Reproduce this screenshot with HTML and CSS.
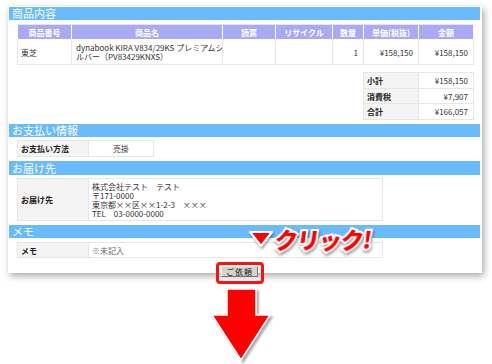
FILE: index.html
```html
<!DOCTYPE html>
<html lang="ja">
<head>
<meta charset="utf-8">
<link rel="stylesheet" href="styles.css">
</head>
<body>
<div class="panel">
  <h2 class="bar">商品内容</h2>
  <table class="grid items">
    <colgroup>
      <col class="c1"><col class="c2"><col class="c3"><col class="c4"><col class="c5"><col class="c6"><col class="c7">
    </colgroup>
    <tr class="head">
      <th>商品番号</th><th>商品名</th><th>読票</th><th>リサイクル</th><th>数量</th><th>単価(税抜)</th><th>金額</th>
    </tr>
    <tr class="item">
      <td>東芝</td>
      <td class="name"><div class="ln">dynabook KIRA V834/29KS プレミアムシ</div><div class="ln">ルバー（PV83429KNXS）</div></td>
      <td></td><td></td>
      <td class="num">1</td>
      <td class="num">¥158,150</td>
      <td class="num">¥158,150</td>
    </tr>
  </table>
  <table class="grid summary">
    <colgroup><col class="s1"><col class="s2"></colgroup>
    <tr class="r1"><td class="label">小計</td><td class="num">¥158,150</td></tr>
    <tr class="r2"><td class="label">消費税</td><td class="num">¥7,907</td></tr>
    <tr class="r3"><td class="label">合計</td><td class="num">¥166,057</td></tr>
  </table>

  <h2 class="bar bar2">お支払い情報</h2>
  <table class="grid pay">
    <colgroup><col class="l"><col class="pv"></colgroup>
    <tr><td class="label">お支払い方法</td><td class="center">売掛</td></tr>
  </table>

  <h2 class="bar bar3">お届け先</h2>
  <table class="grid addr">
    <colgroup><col class="l"><col class="av"></colgroup>
    <tr>
      <td class="label">お届け先</td>
      <td class="lines"><div class="ln">株式会社テスト　テスト</div><div class="ln">〒171-0000</div><div class="ln">東京都××区××1-2-3　×××</div><div class="ln">TEL　03-0000-0000</div></td>
    </tr>
  </table>

  <h2 class="bar bar4">メモ</h2>
  <table class="grid memo">
    <colgroup><col class="l"><col class="av"></colgroup>
    <tr><td class="label">メモ</td><td class="muted">※未記入</td></tr>
  </table>

  <div class="actions">
    <span class="btn-wrap"><button class="btn" type="button">ご依頼</button></span>
  </div>
</div>

<div class="down">
  <svg class="arrow" width="70" height="76" viewBox="0 0 70 76">
    <polygon points="19,2 48,2 48,28 62,28 33,73 4,28 19,28" fill="#ff0000" stroke="#ffffff" stroke-width="1.5" stroke-linejoin="miter"/>
  </svg>
</div>

<div class="callout">
  <svg class="tri" width="26" height="19" viewBox="0 0 26 19">
    <polygon points="2,2 24,2 13,16" fill="#ff0000" stroke="#ffffff" stroke-width="2.2" stroke-linejoin="round"/>
  </svg>
  <span class="click">クリック!</span>
</div>
</body>
</html>
```

FILE: styles.css
```css
html, body {
  margin: 0;
  padding: 0;
}
body {
  width: 492px;
  height: 364px;
  overflow: hidden;
  position: relative;
  background: #ffffff;
  font-family: "Noto Sans CJK JP", "Noto Sans", sans-serif;
  color: #333333;
}

.panel {
  margin: 6px 0 0 8px;
  width: 474px;
  height: 267px;
  box-sizing: border-box;
  padding-top: 1px;
  background: #ffffff;
  box-shadow: 2px 3px 7px rgba(0, 0, 0, 0.34);
}

.bar {
  margin: 0 2px 0 1px;
  height: 13px;
  padding-left: 3px;
  background: #69bbfc;
  color: #ffffff;
  font-size: 11px;
  font-weight: normal;
  line-height: 13px;
  white-space: nowrap;
}
.bar2 { margin-top: 4px; }
.bar3 { margin-top: 4px; height: 14px; line-height: 14px; }
.bar4 { margin-top: 4px; }

.grid {
  border-collapse: collapse;
  table-layout: fixed;
  margin-left: 9px;
  font-size: 8px;
  line-height: 9px;
}
.grid td,
.grid th {
  border: 1px solid #e6e6e6;
  padding: 0 3px;
  white-space: nowrap;
  overflow: hidden;
}
.ln {
  height: 9px;
  line-height: 9px;
}

.items {
  width: 456px;
  margin-top: 4px;
}
.items .c1 { width: 54px; }
.items .c2 { width: 151px; }
.items .c3 { width: 53px; }
.items .c4 { width: 57px; }
.items .c5 { width: 31px; }
.items .c6 { width: 55px; }
.items .c7 { width: 55px; }
.items .head { height: 15px; }
.items th {
  background: #aaaaf4;
  color: #ffffff;
  font-weight: bold;
  border-color: #ffffff;
  border-top-color: #e6e6e6;
}
.items .item { height: 25px; }
.items .name { padding-left: 4px; }

.num {
  text-align: right;
  padding-right: 5px !important;
}
.center { text-align: center; }

.summary {
  width: 110px;
  margin-top: 7px;
  margin-left: 355px;
}
.summary .s1 { width: 55px; }
.summary .s2 { width: 55px; }
.summary .r1 { height: 16px; }
.summary .r2 { height: 15px; }
.summary .r3 { height: 16px; }

.label {
  background: #f4f4f4;
  font-weight: bold;
  color: #222222;
}

.pay {
  width: 136px;
  margin-top: 3px;
}
.pay .l { width: 71px; }
.pay .pv { width: 65px; }
.pay tr { height: 16px; }

.addr {
  width: 365px;
  margin-top: 3px;
}
.addr .l, .memo .l { width: 71px; }
.addr .av, .memo .av { width: 294px; }
.addr tr { height: 42px; }
.lines { padding-left: 4px; }

.memo {
  width: 366px;
  margin-top: 4px;
}
.memo tr { height: 15px; }
.muted { color: #666666; padding-left: 4px; }

.actions {
  margin-top: 8px;
  padding-left: 213px;
  height: 11px;
}
.btn-wrap {
  position: relative;
  display: inline-block;
  vertical-align: top;
}
.btn-wrap::after {
  content: "";
  position: absolute;
  left: -5px;
  top: -4px;
  right: -6px;
  bottom: -7px;
  border: 3px solid #ff1010;
  border-radius: 4px;
}
.btn {
  display: block;
  width: 37px;
  height: 11px;
  margin: 0;
  padding: 0;
  box-sizing: border-box;
  background: #d6d3cb;
  border: 1px solid;
  border-color: #f4f2ee #777770 #777770 #f4f2ee;
  font-family: "Noto Sans CJK JP", sans-serif;
  font-size: 8px;
  line-height: 9px;
  color: #222222;
  letter-spacing: 1px;
}

.down {
  margin-top: 14px;
  padding-left: 208px;
  height: 76px;
}
.arrow {
  display: block;
  filter: drop-shadow(2px 2px 1px rgba(0, 0, 0, 0.35));
}

.callout {
  position: absolute;
  left: 248px;
  top: 225px;
  display: flex;
  align-items: center;
  height: 28px;
}
.tri {
  display: block;
  filter: drop-shadow(1px 2px 1px rgba(0, 0, 0, 0.35));
}
.click {
  display: block;
  margin-left: 1px;
  font-family: "Noto Sans CJK JP", sans-serif;
  font-weight: 900;
  font-size: 23px;
  line-height: 28px;
  color: #ff0000;
  letter-spacing: -1px;
  transform: skewX(-8deg);
  -webkit-text-stroke: 4px #ffffff;
  paint-order: stroke fill;
  filter: drop-shadow(1px 2px 1.5px rgba(0, 0, 0, 0.4));
}
```
